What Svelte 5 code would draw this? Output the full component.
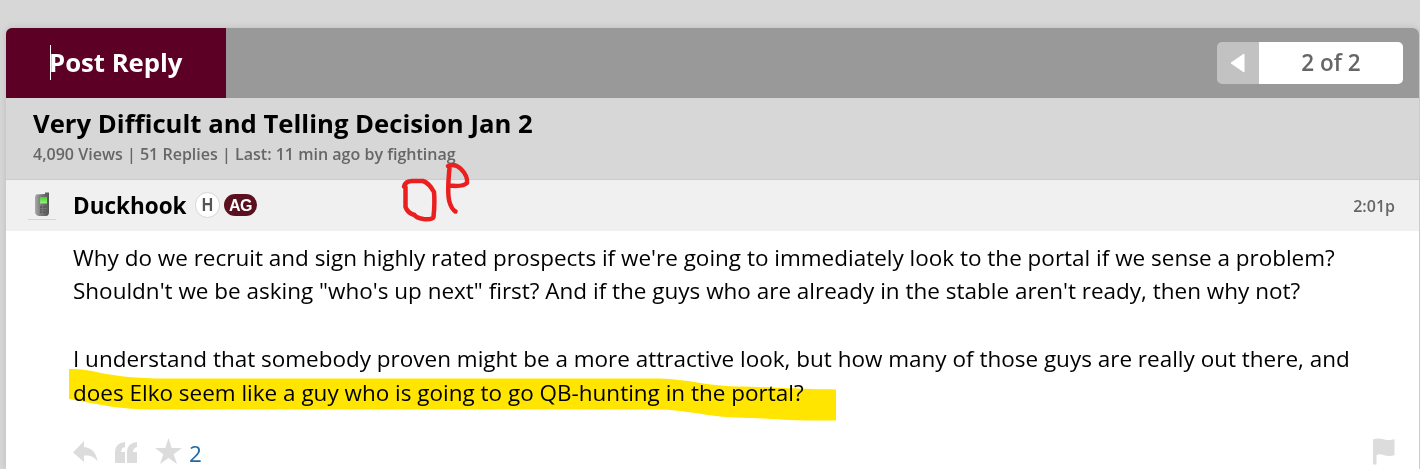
<script>
  const thread = { title: 'Very Difficult and Telling Decision Jan 2', meta: '4,090 Views | 51 Replies | Last: 11 min ago by fightinag' };
</script>

<main>
  <article class="thread">
    <header class="toolbar">
      <button class="reply"><i class="caret"></i><span>Post Reply</span></button>
      <nav class="pager">
        <span class="prev"><svg width="16" height="22" viewBox="0 0 16 22"><path d="M1 11 14 2v18Z" fill="#fff" stroke="#fff" stroke-linejoin="round" /></svg></span>
        <span class="pages">2 of 2</span>
      </nav>
    </header>
    <section class="heading">
      <h1>{thread.title}</h1>
      <p>{thread.meta}</p>
    </section>
    <section class="author">
      <span class="avatar">
        <svg width="28" height="30" viewBox="0 0 28 30">
          <defs>
            <linearGradient id="shell"><stop stop-color="#aaa" /><stop offset=".35" stop-color="#808080" /><stop offset="1" stop-color="#555" /></linearGradient>
            <linearGradient id="screen" x2="0" y2="1"><stop stop-color="#4fc83b" /><stop offset="1" stop-color="#96f478" /></linearGradient>
          </defs>
          <path d="M8 4.500 17 4V2.500h4V22q0 4-3 4h-7q-4-1-4-4V7Z" fill="url(#shell)" />
          <path d="M12 7h7v6.500h-7Z" fill="url(#screen)" />
          <path d="M12 16h7v7h-7Z" fill="#5e5e5e" />
          <path d="M12 18.500h7M12 21h6M14.500 16v7" stroke="#7c7c7c" stroke-width=".7" />
          <path d="M0 29.500h28" stroke="#dcd2d4" />
        </svg>
      </span>
      <strong>Duckhook</strong>
      <span class="badge house"><b>H</b></span>
      <span class="badge ag">AG</span>
      <time>2:01p</time>
    </section>
    <section class="post">
      <p>
        <span>Why do we recruit and sign highly rated prospects if we're going to immediately look to the portal if we sense a problem?</span>
        <span>Shouldn't we be asking "who's up next" first? And if the guys who are already in the stable aren't ready, then why not?</span>
      </p>
      <p>
        <span>I understand that somebody proven might be a more attractive look, but how many of those guys are really out there, and</span>
        <span>does Elko seem like a guy who is going to go QB-hunting in the portal?</span>
      </p>
    </section>
    <footer class="actions">
      <svg width="26" height="24" viewBox="0 0 26 24"><path d="M0 11.500 11 0v6c7 .5 12 5 13.500 14-4-4.500-7.500-6-13.500-5.500V21Z" /></svg>
      <svg class="quote" width="24" height="24" viewBox="0 0 24 24"><path d="M0 22V11Q0 2 10 1v5Q6 7 6 11h4v11ZM12 22V11Q12 2 22 1v5q-4 1-4 5h4v11Z" /></svg>
      <svg class="star" width="28" height="27" viewBox="0 0 28 27"><path d="m13.500 0 3.200 10H27l-8.300 6.200L22 26l-8.500-6L5 26l3.300-9.800L0 10h10.300Z" /></svg>
      <span class="likes">2</span>
      <svg class="flag" width="23" height="27" viewBox="0 0 23 27"><path d="M0 1.500C8-2 13 4.500 21.500 1v16C13 20.500 9 14 3.500 17v9.500H0Z" /></svg>
    </footer>
  </article>
  <svg class="marker" width="1420" height="469" viewBox="0 0 1420 469"><path d="M69 369Q80 368.500 92 371C112 376 137 378.500 166 378.500H660C686 379 708 386 736 386.500 766 386.500 785 389 836 389.500v31H807C783 420 765 418 736 417.500 707 417 687 409.500 657 409.500H150C119 409.500 98 404 69 399Z" fill="#ffe500" /></svg>
  <svg class="ink" width="1420" height="469" viewBox="0 0 1420 469"><path d="M404 186.500q1.500-5.500 8-5.500h11q6 2 11 11 1 10-.5 25-1 3-10 2-7-1-9-4-7-2-9-8V187M449.500 168q-2.500 26 0 34 2 7 6 9.500M448 166q7-3 13 3 7 7 6 14-4 4-18 2.500" fill="none" stroke="#ea2020" stroke-width="4.500" stroke-linecap="round" stroke-linejoin="round" /></svg>
</main>

<style>
  :global(body) { margin: 0; background: #d7d7d7; overflow: hidden; }
  main { position: relative; box-sizing: border-box; width: 1420px; height: 469px; padding: 28px 1px 0 6px; overflow: hidden; font-family: 'Open Sans', sans-serif; color: #000; }
  .thread { height: 441px; background: #fff; border-radius: 6px 6px 0 0; overflow: hidden; box-shadow: 0 0 7px #bbb; }
  h1, p { margin: 0; white-space: nowrap; }
  .toolbar { height: 70px; display: flex; justify-content: space-between; align-items: center; background: #999; }
  .reply { width: 220px; height: 70px; padding: 0 0 0 44px; border: 0; display: flex; align-items: center; background: #5c0025; color: #fff; font: 700 25.700px/36px 'Open Sans', sans-serif; }
  .caret { width: 1px; height: 35px; margin-top: -1px; background: #fff; }
  .reply span { margin-left: -2px; }
  .pager { display: flex; width: 186px; height: 42px; margin-right: 16px; border-radius: 5px; overflow: hidden; }
  .prev { width: 42px; display: flex; align-items: center; background: #c2c2c2; }
  .prev svg { margin-left: 12.500px; }
  .pages { flex: 1; background: #fff; text-align: center; color: #666; font: 600 22.500px/42px 'Open Sans', sans-serif; }
  .heading { height: 82px; box-sizing: border-box; padding: 8px 27px 0; background: #d7d7d7; border-bottom: 1px solid #ccc; }
  h1 { font-size: 25.700px; line-height: 36px; font-weight: 700; }
  .heading p { font-size: 16.050px; line-height: 24px; font-weight: 600; color: #666; }
  .author { height: 51px; display: flex; align-items: center; padding: 0 24px 0 22px; background: #f0f0f0; }
  .avatar { width: 45px; height: 31px; margin-top: -1px; }
  strong { width: 114px; font-size: 22.500px; font-weight: 700; }
  .badge { box-sizing: border-box; display: flex; align-items: center; justify-content: center; font-family: 'Liberation Sans', sans-serif; font-weight: 700; }
  .house { width: 25px; height: 26px; margin-left: 8px; margin-top: -1px; border: 1px solid #d6d6d6; border-radius: 13px; background: #fff; color: #555; font-size: 17.500px; }
  .house b { transform: scaleX(.9); }
  .ag { width: 33px; height: 22px; margin-left: 4px; margin-top: -1px; padding-top: 1px; border-radius: 11px; background: #5a101f; color: #fff; font-size: 16px; letter-spacing: -.5px; }
  time { margin-left: auto; color: #666; font-size: 16px; font-weight: 600; }
  .post { height: 205px; box-sizing: border-box; padding: 9.650px 0 0 67px; font-size: 22.490px; line-height: 33.750px; }
  .post p { position: relative; z-index: 2; margin-bottom: 33.750px; }
  .post span { display: block; width: max-content; }
  .actions { display: flex; height: 33px; padding: 5px 23px 0 67px; box-sizing: border-box; fill: #dcdcdc; }
  .actions svg { flex: none; overflow: visible; }
  .quote { margin-left: 16px; }
  .star { margin-left: 16px; margin-top: -3px; }
  .likes { margin-left: 6px; margin-top: -4px; color: #2468a2; font-size: 22.500px; line-height: 34px; }
  .flag { margin-left: auto; margin-top: -3px; }
  .marker, .ink { position: absolute; inset: 0; pointer-events: none; }
  .marker { mix-blend-mode: multiply; z-index: 1; }
  .ink { z-index: 3; }
</style>
